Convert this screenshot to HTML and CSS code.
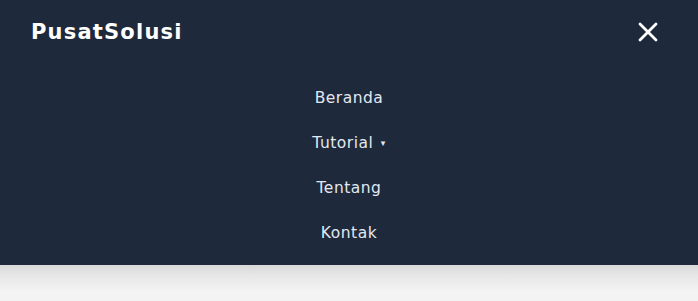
FILE: index.html
```html
<!DOCTYPE html>
<html lang="en">
  <head>
    <meta charset="UTF-8" />
    <meta name="viewport" content="width=device-width, initial-scale=1.0" />
    <title>PusatSolusi</title>
    <link rel="stylesheet" href="styles.css">
  </head>
  <body>
    <header class="navbar">
      <div class="nav-top">
        <a href="#" class="logo">PusatSolusi</a>
        <button type="button" class="close-btn" aria-label="Tutup menu">
          <svg width="20" height="20" viewBox="0 0 20 20">
            <path d="M2 2 L18 18 M18 2 L2 18" stroke="#ffffff" stroke-width="2.8" stroke-linecap="round" />
          </svg>
        </button>
      </div>
      <ul class="menu">
        <li><a href="#">Beranda</a></li>
        <li><a href="#">Tutorial <span class="caret">&#9662;</span></a></li>
        <li><a href="#">Tentang</a></li>
        <li><a href="#">Kontak</a></li>
      </ul>
    </header>
    <main class="content"></main>
  </body>
</html>
```

FILE: styles.css
```css
body {
  margin: 0;
  background-color: #f3f3f3;
  font-family: "DejaVu Sans", Arial, sans-serif;
}

.navbar {
  background-color: #1e293b;
  height: 265px;
}

/* soft shadow under the open menu */
.content {
  height: 36px;
  background: linear-gradient(to bottom, #d9d9d9 0, #e6e6e6 10px, #f3f3f3 26px);
}

.nav-top {
  display: flex;
  justify-content: space-between;
  align-items: center;
  height: 64px;
  padding: 0 40px 0 31px;
}

.logo {
  color: #ffffff;
  font-size: 21px;
  font-weight: 700;
  text-decoration: none;
  letter-spacing: 1.2px;
}

.close-btn {
  background: none;
  border: none;
  padding: 0;
  cursor: pointer;
  display: flex;
}

.menu {
  list-style: none;
  margin: 0;
  padding: 11px 0 0;
  display: flex;
  flex-direction: column;
  align-items: center;
}

.menu li {
  height: 45px;
  display: flex;
  align-items: center;
}

.menu a {
  color: #e2e8f0;
  font-size: 15.5px;
  letter-spacing: 0.5px;
  text-decoration: none;
}

.caret {
  font-size: 9px;
  margin-left: 2px;
  vertical-align: 2px;
}
```
